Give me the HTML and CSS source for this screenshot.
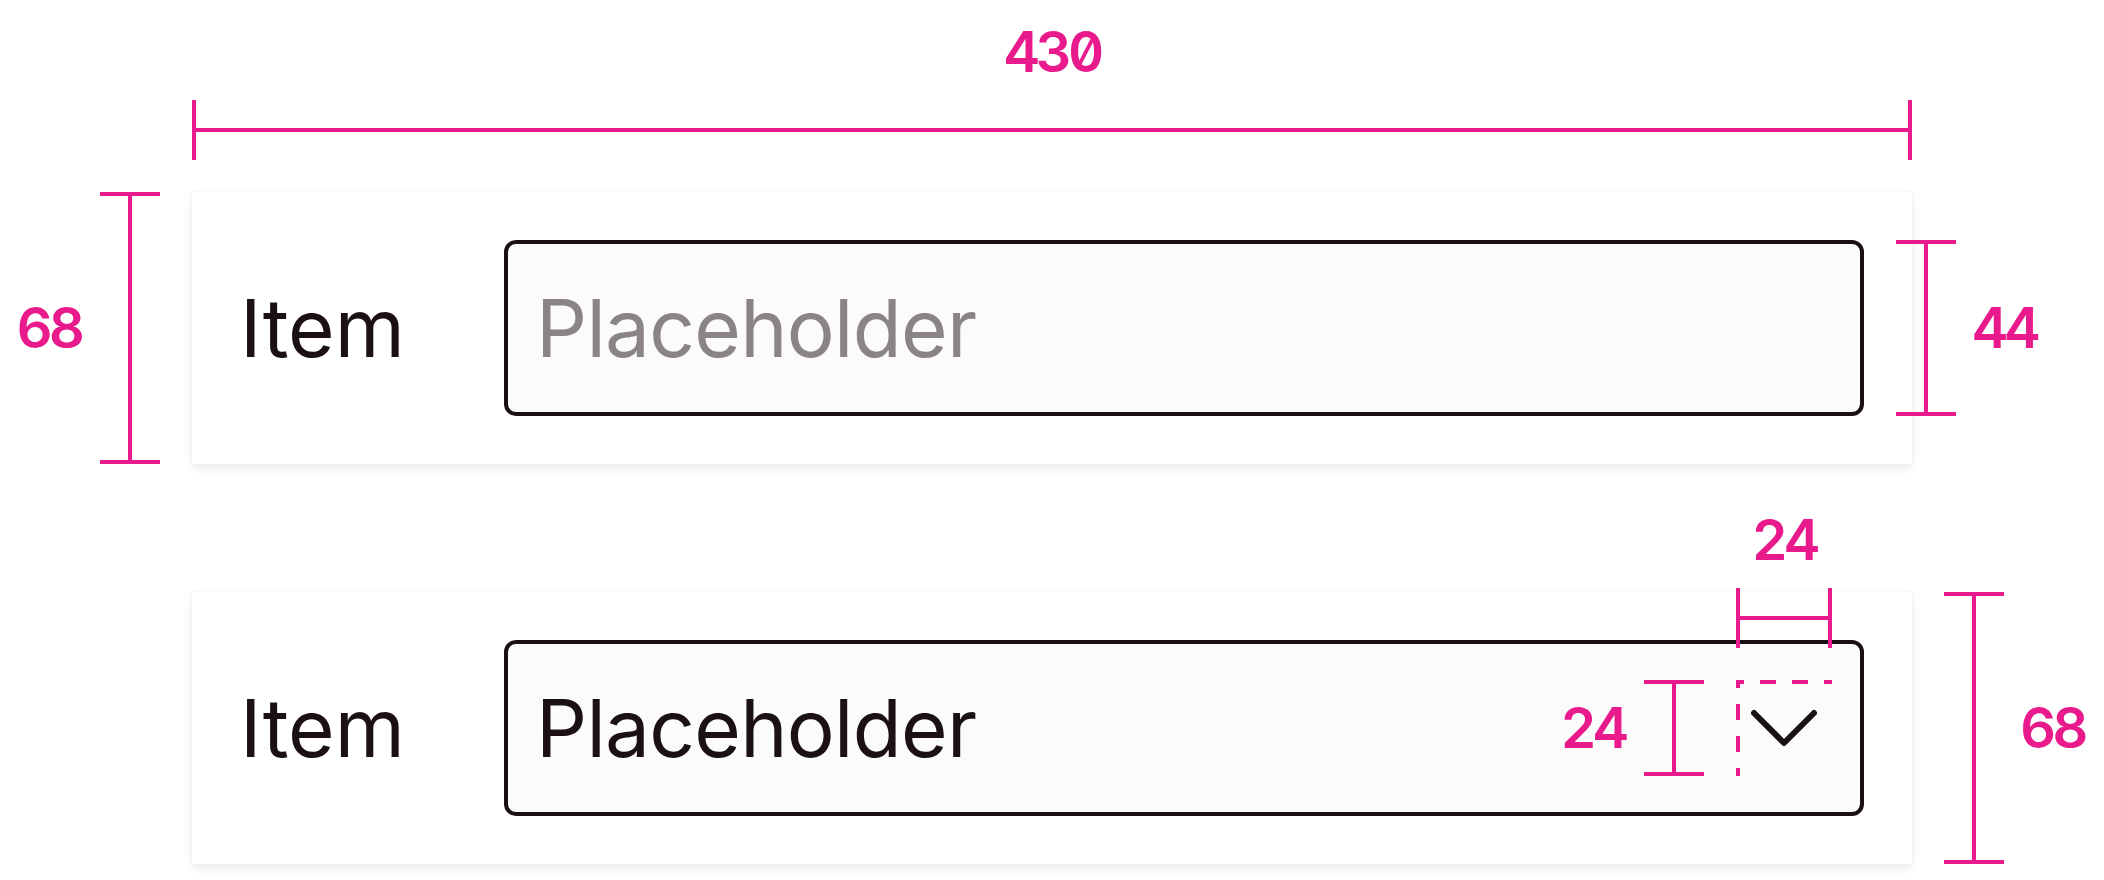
FILE: index.html
```html
<!DOCTYPE html>
<html lang="en">
<head>
<meta charset="utf-8">
<title>Field spec</title>
<link rel="stylesheet" href="styles.css">
</head>
<body>
<div class="sheet">
  <div class="row row-top">
    <div class="side"></div>
    <div class="span-dim">
      <div class="dim-label">430</div>
      <div class="hdim"></div>
    </div>
  </div>

  <div class="row">
    <div class="side side-left">
      <span class="dim-label">68</span>
      <div class="vdim vdim-card"></div>
    </div>
    <div class="card">
      <span class="item-label">Item</span>
      <div class="field">
        <span class="field-text placeholder">Placeholder</span>
      </div>
    </div>
    <div class="side side-right">
      <div class="vdim vdim-field"></div>
      <span class="dim-label">44</span>
    </div>
  </div>

  <div class="row row-second">
    <div class="side side-left"></div>
    <div class="card">
      <span class="item-label">Item</span>
      <div class="field">
        <span class="field-text">Placeholder</span>
        <div class="icon">
          <svg class="chevron" width="96" height="96" viewBox="0 0 24 24" aria-hidden="true">
            <path d="M4.5 8.25 L12 15.75 L19.5 8.25" fill="none" stroke="#1a1016" stroke-width="1.5" stroke-linecap="round" stroke-linejoin="round"/>
          </svg>
          <svg class="dashes" width="96" height="96" viewBox="0 0 96 96" aria-hidden="true">
            <line x1="0" y1="2" x2="96" y2="2" stroke="#e91a8c" stroke-width="4" stroke-dasharray="16 16" stroke-dashoffset="8"/>
            <line x1="2" y1="0" x2="2" y2="96" stroke="#e91a8c" stroke-width="4" stroke-dasharray="16 16" stroke-dashoffset="8"/>
          </svg>
          <div class="icon-top">
            <span class="dim-label">24</span>
            <div class="hdim"></div>
          </div>
          <div class="icon-left">
            <span class="dim-label">24</span>
            <div class="vdim vdim-icon"></div>
          </div>
        </div>
      </div>
    </div>
    <div class="side side-right">
      <div class="vdim vdim-card vdim-out"></div>
      <span class="dim-label">68</span>
    </div>
  </div>
</div>
</body>
</html>
```

FILE: styles.css
```css
* {
  box-sizing: border-box;
}

html,
body {
  margin: 0;
  padding: 0;
  background: #ffffff;
}

body {
  width: 2104px;
  height: 880px;
  overflow: hidden;
  font-family: Inter, "Noto Sans", sans-serif;
  color: #1a1016;
}

.sheet {
  display: flex;
  flex-direction: column;
}

.row {
  display: flex;
  align-items: center;
}

.row-second {
  margin-top: 128px;
}

.side {
  flex: 0 0 192px;
  width: 192px;
  display: flex;
  align-items: center;
  justify-content: flex-end;
  gap: 19px;
  padding-right: 32px;
}

.side-right {
  flex: 1 1 auto;
  justify-content: flex-start;
  gap: 16px;
  padding-right: 0;
}

/* dimension annotations */
.dim-label {
  font-family: Inter, "DejaVu Sans", sans-serif;
  font-size: 56px;
  line-height: 56px;
  height: 56px;
  font-weight: 600;
  letter-spacing: -4px;
  color: #e91a8c;
  font-feature-settings: "tnum" 1, "zero" 1;
  font-variant-numeric: tabular-nums slashed-zero;
  white-space: nowrap;
}

.hdim {
  position: relative;
  height: 60px;
  border-left: 4px solid #e91a8c;
  border-right: 4px solid #e91a8c;
}

.hdim::before {
  content: "";
  position: absolute;
  left: 0;
  right: 0;
  top: 28px;
  height: 4px;
  background: #e91a8c;
}

.vdim {
  position: relative;
  flex: 0 0 60px;
  width: 60px;
  border-top: 4px solid #e91a8c;
  border-bottom: 4px solid #e91a8c;
}

.vdim::before {
  content: "";
  position: absolute;
  top: 0;
  bottom: 0;
  left: 28px;
  width: 4px;
  background: #e91a8c;
}

.vdim-card {
  height: 272px;
}

.vdim-field {
  height: 176px;
  margin-left: -16px;
}

.vdim-out {
  margin-left: 32px;
}

.vdim-icon {
  height: 96px;
}

.span-dim {
  flex: 0 0 1720px;
  width: 1720px;
  display: flex;
  flex-direction: column;
  align-items: center;
  padding-top: 24px;
  padding-bottom: 32px;
}

.span-dim .hdim {
  align-self: stretch;
  margin-top: 20px;
}

/* card */
.card {
  flex: 0 0 1720px;
  width: 1720px;
  height: 272px;
  padding: 48px;
  display: flex;
  align-items: center;
  background: #ffffff;
  box-shadow: 0 0 3px rgba(0, 0, 0, 0.05), 0 4px 10px rgba(0, 0, 0, 0.08);
}

.item-label {
  flex: 0 0 264px;
  width: 264px;
  font-size: 80px;
  line-height: 96px;
  font-weight: 400;
  color: #1a1016;
  white-space: nowrap;
}

.field {
  flex: 1 1 auto;
  height: 176px;
  border: 4px solid #1a0f15;
  border-radius: 12px;
  background: #fbfbfb;
  padding: 0 28px;
  display: flex;
  align-items: center;
  justify-content: space-between;
}

.field-text {
  font-size: 80px;
  line-height: 96px;
  font-weight: 400;
  letter-spacing: -0.7px;
  color: #1a1016;
  white-space: nowrap;
}

.field-text.placeholder {
  color: #8a8486;
}

.icon {
  position: relative;
  flex: 0 0 96px;
  width: 96px;
  height: 96px;
}

.chevron {
  display: block;
}

.dashes {
  position: absolute;
  left: 0;
  top: 0;
}

.icon-top {
  position: absolute;
  left: 0;
  width: 96px;
  bottom: calc(100% + 32px);
  display: flex;
  flex-direction: column;
  align-items: center;
  gap: 20px;
}

.icon-top .hdim {
  align-self: stretch;
}

.icon-left {
  position: absolute;
  right: calc(100% + 32px);
  top: 0;
  height: 96px;
  display: flex;
  align-items: center;
  gap: 19px;
}
```
